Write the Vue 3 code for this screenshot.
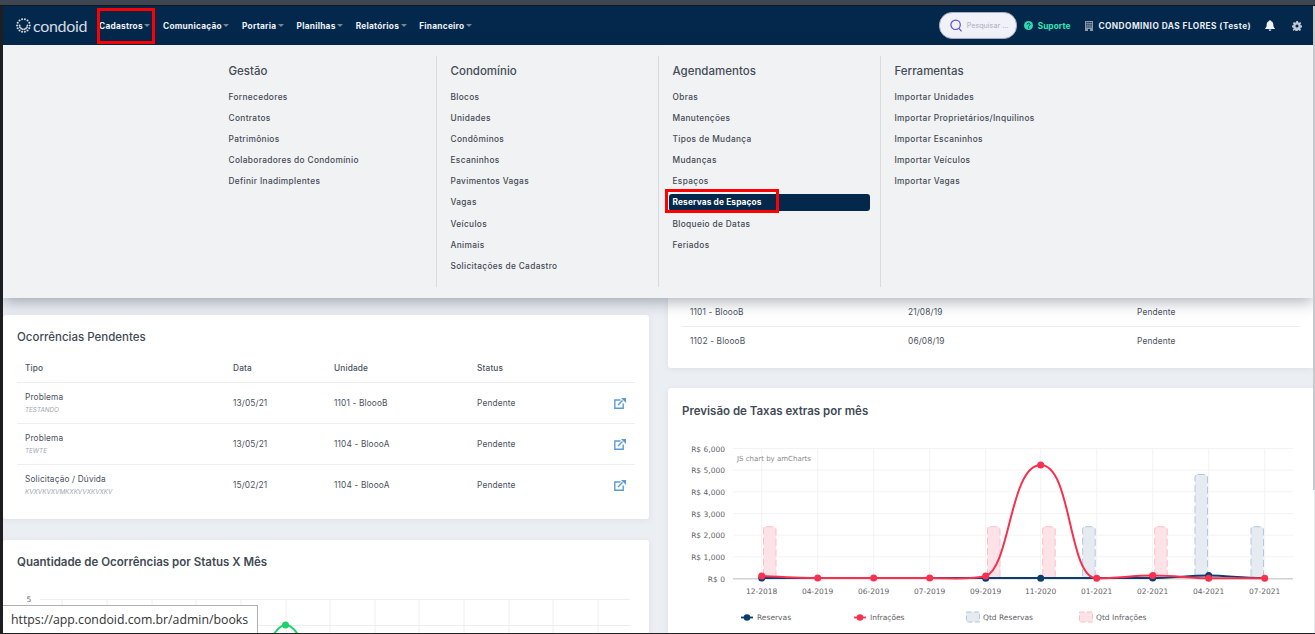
<script setup>
const navItems = ['Cadastros','Comunicação','Portaria','Planilhas','Relatórios','Financeiro']
const menu = [
  { t:'Gestão', items:['Fornecedores','Contratos','Patrimônios','Colaboradores do Condomínio','Definir Inadimplentes'] },
  { t:'Condomínio', items:['Blocos','Unidades','Condôminos','Escaninhos','Pavimentos Vagas','Vagas','Veículos','Animais','Solicitações de Cadastro'] },
  { t:'Agendamentos', items:['Obras','Manutenções','Tipos de Mudança','Mudanças','Espaços','Reservas de Espaços','Bloqueio de Datas','Feriados'] },
  { t:'Ferramentas', items:['Importar Unidades','Importar Proprietários/Inquilinos','Importar Escaninhos','Importar Veículos','Importar Vagas'] }
]
const occ = [
  { a:'Problema', s:'TESTANDO', d:'13/05/21', u:'1101 - BloooB' },
  { a:'Problema', s:'TEWTE', d:'13/05/21', u:'1104 - BloooA' },
  { a:'Solicitação / Dúvida', s:'KVXVKVXVMKXKVVXKVXKV', d:'15/02/21', u:'1104 - BloooA' }
]
const pend = [
  { u:'1101 - BloooB', d:'21/08/19' },
  { u:'1102 - BloooB', d:'06/08/19' }
]
const gridY = [448.5,470.2,491.8,513.5,535.2,556.8]
const yLabels = ['R$ 6,000','R$ 5,000','R$ 4,000','R$ 3,000','R$ 2,000','R$ 1,000','R$ 0']
const xs = [761.7,817.7,873.7,929.7,985.7,1040.7,1096.7,1152.7,1208.7,1264.7]
const xl = ['12-2018','04-2019','06-2019','07-2019','09-2019','11-2020','01-2021','02-2021','04-2021','07-2021']
const pink = [763.5,987.5,1042.7,1154.7]
const blue = [{x:1082.7,y:526.7},{x:1195,y:474.5},{x:1251,y:526.7}]
const redPts = [[761.7,576],[817.7,578],[873.7,578],[929.7,578],[985.7,576],[1040.7,465],[1096.7,578.3],[1152.7,575.5],[1208.7,578.3],[1264.7,578.3]]
const bluePts = [[761.7,578],[985.7,578.3],[1040.7,578.3],[1152.7,578],[1208.7,575.5]]
const leftV = [62,107,152,196,241,286,330,375,419,464,509,553,598]
const dots = Array.from({length:22},(_,i)=>{const a=i*Math.PI/7;const r=i<14?6.4:3.9;return {x:+(7.5+r*Math.cos(a)).toFixed(1),y:+(7.5+r*Math.sin(a)).toFixed(1),r:i<14?1.05:.95}})
</script>

<template>
  <div class="frame">
    <div class="topline"></div>
    <div class="mid">
      <div class="strip"></div>
      <div class="page">
        <header class="nav">
          <div class="logo">
            <svg width="15" height="15" viewBox="0 0 15 15"><circle v-for="(d,i) in dots" :key="i" :cx="d.x" :cy="d.y" :r="d.r" fill="#ccd3dc"/></svg>
            <span>condoid</span>
          </div>
          <nav class="links">
            <a v-for="n in navItems" :key="n" class="link">{{ n }}<i class="caret"></i></a>
          </nav>
          <div class="right">
            <div class="search">
              <svg width="12" height="13" viewBox="0 0 12 13" fill="none" stroke="#5b4fd8" stroke-width="1.2"><circle cx="5.6" cy="5.8" r="4.700"/><path d="M9 9.300l2.500 3"/></svg>
              <span>Pesquisar ...</span>
            </div>
            <div class="sup">
              <svg width="9" height="9" viewBox="0 0 10 10"><circle cx="5" cy="5" r="5" fill="#2fd8b0"/><path d="M3.400 3.900c0-2 3.300-2 3.300 0 0 1.100-1.600 1.100-1.600 2.200" fill="none" stroke="#03284b" stroke-width="1.100"/><circle cx="5.100" cy="7.700" r=".7" fill="#03284b"/></svg>
              <span>Suporte</span>
            </div>
            <div class="cond">
              <svg width="8" height="10" viewBox="0 0 8 10"><path fill="#8d99a8" fill-rule="evenodd" d="M0 0h8v10H5V8H3v2H0zM1.200 1v1.200h1.400V1zm2.100 0v1.200h1.400V1zm2.100 0v1.200h1.400V1zM1.200 3.200v1.200h1.400V3.200zm2.100 0v1.200h1.400V3.200zm2.100 0v1.200h1.400V3.200zM1.200 5.400v1.200h1.400V5.400zm2.100 0v1.200h1.400V5.400zm2.100 0v1.200h1.400V5.400z"/></svg>
              <span>CONDOMINIO DAS FLORES (Teste)</span>
            </div>
            <svg class="bell" width="10" height="11" viewBox="0 0 10 11"><path fill="#eef1f5" d="M5 0c.5 0 .8.4.8.9C7.400 1.300 8.300 2.600 8.300 4.200c0 2.500.7 3.300 1.500 4.100V9H.2v-.7C1 7.500 1.700 6.700 1.700 4.200 1.700 2.600 2.600 1.300 4.200.9 4.200.4 4.500 0 5 0zM3.700 9.600h2.600C6.300 10.400 5.700 11 5 11s-1.300-.6-1.300-1.400z"/></svg>
            <svg class="gear" width="10" height="10" viewBox="0 0 11 11"><path fill="#bfc7d0" fill-rule="evenodd" d="M4.500 0h2l.3 1.500 1 .4L9.100 1l1 1.400-.9 1.200.3 1 1.500.4v1.900l-1.500.4-.3 1-.1.1.9 1.200-1.400 1.300-1.300-.9-1 .4-.3 1.100h-2l-.3-1.100-1-.4-1.300.9L.9 9.600l.9-1.200-.4-1L0 7V5l1.400-.4.4-1-.9-1.200L2.300 1l1.300.9 1-.4zM5.500 3.800a1.700 1.700 0 1 0 0 3.400 1.700 1.700 0 0 0 0-3.400z"/></svg>
          </div>
        </header>

        <main class="grid">
          <div class="col">
            <section class="card hidden-top"></section>
            <section class="card occ">
              <h2>Ocorrências Pendentes</h2>
              <div class="trow head"><span>Tipo</span><span>Data</span><span>Unidade</span><span>Status</span><span></span></div>
              <div v-for="(r,i) in occ" :key="i" class="trow">
                <div><div>{{ r.a }}</div><div class="sub">{{ r.s }}</div></div>
                <span>{{ r.d }}</span><span>{{ r.u }}</span><span>Pendente</span>
                <svg class="ext" width="12" height="11" viewBox="0 0 12 11" fill="none" stroke="#5b9bd5" stroke-width="1.400"><path d="M6.500 2H.8v8.300h8.400V5.500"/><path d="M4 7 8.500 2.500" stroke-width="1.500"/><path fill="#5b9bd5" stroke="none" d="M7 0h5v5z"/></svg>
              </div>
            </section>
            <section class="card statusc">
              <h2 class="strong">Quantidade de Ocorrências por Status X Mês</h2>
              <svg class="chart" width="646" height="50" viewBox="3 584 646 50">
                <text x="29" y="602" class="ax" text-anchor="middle">5</text>
                <line x1="40" x2="630" y1="599.500" y2="599.500" stroke="#eceef0"/>
                <line x1="40" x2="630" y1="625.500" y2="625.500" stroke="#eceef0"/>
                <line v-for="x in leftV" :key="x" :x1="x" :x2="x" y1="599" y2="634" stroke="#eceef0"/>
                <path d="M270 640C276 630 281 625 285.500 625S296 630 301 640" fill="none" stroke="#1ed26a" stroke-width="2"/>
                <circle cx="285.500" cy="625" r="3.500" fill="#1ed26a"/>
              </svg>
            </section>
          </div>
          <div class="col">
            <section class="card pend">
              <div v-for="(r,i) in pend" :key="i" class="prow"><span>{{ r.u }}</span><span>{{ r.d }}</span><span>Pendente</span></div>
            </section>
            <section class="card extra">
              <h2 class="strong">Previsão de Taxas extras por mês</h2>
              <svg class="chart" width="644" height="200" viewBox="668 434 644 200">
                <line v-for="y in gridY" :key="y" x1="733" x2="1293" :y1="y" :y2="y" stroke="#f3f3f3"/>
                <line v-for="x in xs" :key="x" :x1="x" :x2="x" y1="448" y2="578" stroke="#f3f3f3"/>
                <text x="737" y="461" class="wm">JS chart by amCharts</text>
                <text v-for="(l,i) in yLabels" :key="l" x="725" :y="451.500+i*21.67" class="ax" text-anchor="end">{{ l }}</text>
                <text v-for="(l,i) in xl" :key="l" :x="xs[i]" y="594" class="ax" text-anchor="middle">{{ l }}</text>
                <rect v-for="x in pink" :key="x" :x="x" y="526.700" width="12.500" height="52" rx="2.500" fill="#fde3e8" stroke="#fbbfcb" stroke-dasharray="7 3.500"/>
                <rect v-for="b in blue" :key="b.x" :x="b.x" :y="b.y" width="12.500" :height="578.700-b.y" rx="2.500" fill="#e6ebf2" stroke="#b3c7db" stroke-dasharray="7 3.500"/>
                <line x1="733" x2="1293" y1="578.700" y2="578.700" stroke="#d2d2d4" stroke-width="1.500"/>
                <path d="M761.700 578H985.700L1152.700 578C1170 578 1190 575.500 1208.700 575.500S1240 578 1264.700 578" fill="none" stroke="#0b3d6e" stroke-width="1.800"/>
                <circle v-for="(p,i) in bluePts" :key="i" :cx="p[0]" :cy="p[1]" r="3.500" fill="#0b3d6e"/>
                <path d="M761.700 576C780 577 800 578 817.700 578H929.700C950 578 972 580 985.700 576C1010 568 1010 465 1040.700 465C1072 465 1068 578.300 1096.700 578.300C1120 578.300 1130 575.500 1152.700 575.500S1190 578.300 1208.700 578.300H1264.700" fill="none" stroke="#f8304f" stroke-width="2"/>
                <circle v-for="(p,i) in redPts" :key="i" :cx="p[0]" :cy="p[1]" r="3.500" fill="#f8304f"/>
                <line x1="741" x2="753" y1="617.500" y2="617.500" stroke="#0b3d6e" stroke-width="1.800"/><circle cx="747" cy="617.500" r="3.300" fill="#0b3d6e"/>
                <text x="757" y="620" class="ax">Reservas</text>
                <line x1="854" x2="866" y1="617.500" y2="617.500" stroke="#f8304f" stroke-width="1.800"/><circle cx="860" cy="617.500" r="3.300" fill="#f8304f"/>
                <text x="870" y="620" class="ax">Infrações</text>
                <rect x="966.500" y="612" width="13" height="10" fill="#e6ebf2" stroke="#b3c7db" stroke-dasharray="5 2.500"/>
                <text x="983" y="620" class="ax">Qtd Reservas</text>
                <rect x="1079.500" y="612" width="13" height="10" fill="#fde3e8" stroke="#fbbfcb" stroke-dasharray="5 2.500"/>
                <text x="1096" y="620" class="ax">Qtd Infrações</text>
              </svg>
            </section>
          </div>
        </main>

        <div class="mega">
          <div v-for="c in menu" :key="c.t" class="mcol">
            <h3>{{ c.t }}</h3>
            <a v-for="it in c.items" :key="it" class="mi" :class="{ on: it==='Reservas de Espaços' }">{{ it }}</a>
          </div>
        </div>

        <div class="mark m1"></div>
        <div class="mark m2"></div>
        <div class="scroll"></div>
        <div class="status">https://app.condoid.com.br/admin/books</div>
      </div>
    </div>
    <div class="bottomline"></div>
  </div>
</template>

<style>
html, body { margin: 0; overflow: hidden; }
</style>

<style scoped>
.frame { width: 1315px; height: 634px; display: flex; flex-direction: column; overflow: hidden; font-family: "Inter", "Noto Sans", sans-serif; color: #3c4452; }
.topline { height: 5px; background: #3d4651; border-bottom: 1px solid #14181d; flex: none; }
.mid { flex: 1; display: flex; min-height: 0; }
.strip { width: 3px; background: #1c1e22; flex: none; }
.bottomline { height: 1px; background: #222; flex: none; }
.page { flex: 1; position: relative; background: #ebeef3; overflow: hidden; min-width: 0; }

.nav { height: 39px; background: #03284b; display: flex; align-items: center; color: #fff; }
.logo { display: flex; align-items: center; width: 92px; padding-left: 13px; box-sizing: border-box; color: #d5dbe2; font-size: 16px; letter-spacing: -0.3px; font-family: "Lato", sans-serif; gap: 2px; }
.links { display: flex; align-items: center; margin-left: 4px; }
.link { font-size: 8.300px; font-weight: 700; color: #eef3f8; letter-spacing: .25px; display: flex; align-items: center; margin-right: 12.700px; }
.caret { width: 0; height: 0; border-left: 3px solid transparent; border-right: 3px solid transparent; border-top: 3px solid #76859a; margin-left: 1.500px; }
.right { margin-left: auto; display: flex; align-items: center; padding-right: 13px; }
.search { width: 78px; height: 27px; box-sizing: border-box; background: #f1f1fa; border: 1px solid #a9aec4; border-radius: 13px; display: flex; align-items: center; gap: 5px; padding-left: 10px; font-size: 7.200px; color: #a9adc0; white-space: nowrap; overflow: hidden; }
.sup { display: flex; align-items: center; gap: 5px; margin-left: 7px; font-size: 8.300px; font-weight: 700; letter-spacing: .05px; color: #33e6b4; }
.cond { display: flex; align-items: center; gap: 5px; margin-left: 15px; font-size: 8.300px; font-weight: 700; letter-spacing: .45px; color: #e6ecf2; white-space: nowrap; }
.bell { margin-left: 14px; }
.gear { margin-left: 17px; }

.grid { display: grid; grid-template-columns: 646px 646px; gap: 19px; }
.col { display: flex; flex-direction: column; gap: 20px; }
.card { background: #fff; border-radius: 3px; box-shadow: 0 1px 6px rgba(60,70,90,.08); }
.hidden-top { height: 230px; margin-top: 20px; }
.occ { height: 204px; padding: 0 14px; box-sizing: border-box; }
h2 { margin: 0; font-size: 11.500px; font-weight: 500; line-height: 44px; color: #424a56; }
h2.strong { font-weight: 600; }
.trow { display: grid; grid-template-columns: 208px 101px 143px 137px 12px; align-items: center; height: 40px; padding-left: 8px; border-top: 1px solid #eceef1; font-size: 8.300px; letter-spacing: .15px; color: #4a5260; }
.trow.head { height: 14px; border: 0; padding-top: 2px; padding-bottom: 7px; font-weight: 500; }
.sub { font-size: 6.300px; font-style: italic; color: #a0a6ae; margin-top: 4px; letter-spacing: 0; }
.statusc { flex: 1; margin-top: 1px; }
.statusc h2 { padding-left: 14px; }
.chart { display: block; }
.pend { height: 323px; box-sizing: border-box; padding: 0 14px 14px; display: flex; flex-direction: column; justify-content: flex-end; }
.prow { display: grid; grid-template-columns: 218px 229px 1fr; align-items: center; height: 28px; box-sizing: border-box; padding-left: 8px; font-size: 8.300px; letter-spacing: .15px; color: #4a5260; }
.prow + .prow { border-top: 1px solid #eceef1; }
.extra h2 { padding-left: 14px; line-height: 46px; }
.extra { flex: 1; }
.ax { font-family: "DejaVu Sans", sans-serif; font-size: 7.500px; fill: #5f6368; }
.wm { font-family: "DejaVu Sans", sans-serif; font-size: 7px; fill: #8a8a8a; }

.mega { position: absolute; left: 0; top: 39px; width: 1310px; height: 253px; background: #f1f2f4; box-shadow: 0 4px 14px rgba(30,40,60,.35); display: flex; padding: 11px 0 0 212px; box-sizing: border-box; }
.mcol { width: 222px; height: 231px; box-sizing: border-box; padding: 0 10px; border-right: 1px solid #d8dade; display: flex; flex-direction: column; }
.mcol:last-child { border-right: 0; }
h3 { margin: 0 0 2.500px 3.500px; font-size: 11.500px; font-weight: 500; line-height: 30px; color: #454c57; }
.mi { height: 17px; line-height: 17px; margin-bottom: 4.200px; padding-left: 3.500px; font-size: 8.300px; font-weight: 500; letter-spacing: .35px; color: #434a55; border-radius: 3px; white-space: nowrap; }
.mi.on { background: #03284b; color: #fff; font-weight: 700; letter-spacing: .15px; }
.mark { position: absolute; border: 3px solid #f00; box-sizing: border-box; }
.m1 { left: 94px; top: 2px; width: 58px; height: 36px; }
.m2 { left: 662px; top: 183px; width: 114px; height: 24px; }
.scroll { position: absolute; right: 0; top: 0; width: 2px; height: 484px; background: #c6c8cc; }
.status { position: absolute; left: 0; bottom: 0; width: 255px; height: 28px; box-sizing: border-box; background: #fff; border: 1px solid #b0b0b0; border-left: 0; border-bottom: 0; font-family: "Open Sans", sans-serif; font-size: 12.300px; line-height: 28px; padding-left: 8px; color: #333; white-space: nowrap; }
</style>
